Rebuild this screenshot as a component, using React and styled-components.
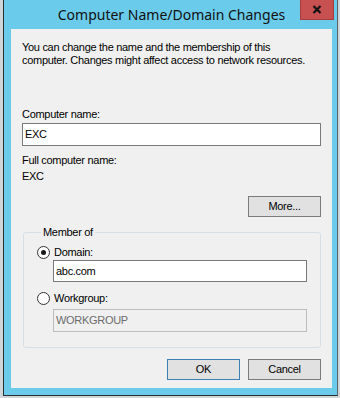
import styled, { createGlobalStyle } from 'styled-components'

const GlobalStyle = createGlobalStyle`
  body {
    margin: 0;
    background: #cfd6da;
    font-family: "Liberation Sans", Arial, sans-serif;
  }
`

const Window = styled.div`
  position: relative;
  box-sizing: border-box;
  width: 335px;
  height: 396px;
  margin-left: 3px;
  display: flex;
  flex-direction: column;
  background: #6bcbea;
  border-left: 1px solid #2b2f33;
  border-right: 1px solid #5d6469;
  border-bottom: 1px solid #2b2f33;
  padding: 0 5px 7px 7px;
`

const TitleBar = styled.div`
  height: 29px;
  display: flex;
  align-items: center;
  justify-content: center;
  padding-bottom: 1px;
  box-sizing: border-box;
`

const Title = styled.span`
  font-family: "Noto Sans", "Open Sans", sans-serif;
  font-size: 14px;
  color: #111;
`

const CloseButton = styled.div`
  position: absolute;
  top: 0;
  right: 3px;
  width: 34px;
  height: 20px;
  box-sizing: border-box;
  background: #c75050;
  border: 1px solid #a63d3d;
  border-top: none;
  display: flex;
  align-items: center;
  justify-content: center;
`

const Content = styled.div`
  flex: 1;
  background: #f0f0f0;
  padding: 12px 11px 0 11px;
  display: flex;
  flex-direction: column;
  font-size: 11px;
  letter-spacing: -0.3px;
  line-height: 13px;
  color: #000;
  white-space: nowrap;
`

const Text = styled.div`
  margin-top: ${(p) => p.$top || 0}px;
`

const Input = styled.div`
  box-sizing: border-box;
  height: ${(p) => p.$height || 23}px;
  margin-top: ${(p) => p.$top || 0}px;
  margin-left: ${(p) => p.$left || 0}px;
  width: ${(p) => (p.$width ? `${p.$width}px` : 'auto')};
  border: 1px solid ${(p) => (p.$disabled ? '#bcbcbc' : '#7a7a7a')};
  background: ${(p) => (p.$disabled ? '#f0f0f0' : '#fff')};
  color: ${(p) => (p.$disabled ? '#6d6d6d' : '#000')};
  padding-left: 2px;
  display: flex;
  align-items: center;
`

const ButtonRow = styled.div`
  display: flex;
  justify-content: flex-end;
  gap: 8px;
  margin-top: ${(p) => p.$top || 0}px;
`

const Button = styled.div`
  box-sizing: border-box;
  width: 73px;
  height: 21px;
  background: #e1e1e1;
  border: 1px solid ${(p) => (p.$default ? '#3c7fb1' : '#7b7b7b')};
  display: flex;
  align-items: center;
  justify-content: center;
`

const Group = styled.fieldset`
  margin: 9px 0 0 1px;
  width: 298px;
  height: 122px;
  box-sizing: border-box;
  border: 1px solid #d5dfe5;
  border-radius: 3px;
  padding: 0 0 0 12px;
  display: flex;
  flex-direction: column;
`

const Legend = styled.legend`
  padding: 0 2px;
  margin-left: 5px;
  line-height: 13px;
`

const RadioRow = styled.div`
  display: flex;
  align-items: center;
  gap: 4px;
  margin-top: ${(p) => p.$top || 0}px;
  margin-left: 1px;
`

const Radio = styled.span`
  box-sizing: border-box;
  width: 13px;
  height: 13px;
  border-radius: 50%;
  border: 1px solid #333;
  background: #fff;
  display: flex;
  align-items: center;
  justify-content: center;

  &::after {
    content: '';
    width: 5px;
    height: 5px;
    border-radius: 50%;
    background: ${(p) => (p.$checked ? '#1a1a1a' : 'transparent')};
  }
`

export default function App() {
  return (
    <>
      <GlobalStyle />
      <Window>
        <TitleBar>
          <Title>Computer Name/Domain Changes</Title>
        </TitleBar>
        <CloseButton>
          <svg width="10" height="9" viewBox="0 0 10 9">
            <path d="M1.5 1 L8.5 8 M8.5 1 L1.5 8" stroke="#111" strokeWidth="2.2" />
          </svg>
        </CloseButton>
        <Content>
          <Text>
            You can change the name and the membership of this
            <br />
            computer. Changes might affect access to network resources.
          </Text>
          <Text $top={41}>Computer name:</Text>
          <Input $top={2}>EXC</Input>
          <Text $top={8}>Full computer name:</Text>
          <Text $top={3}>EXC</Text>
          <ButtonRow $top={13}>
            <Button>More...</Button>
          </ButtonRow>
          <Group>
            <Legend>Member of</Legend>
            <RadioRow $top={7}>
              <Radio $checked />
              <span>Domain:</span>
            </RadioRow>
            <Input $top={1} $left={17} $width={254} $height={22}>abc.com</Input>
            <RadioRow $top={10}>
              <Radio />
              <span>Workgroup:</span>
            </RadioRow>
            <Input $top={4} $left={17} $width={254} $disabled>
              WORKGROUP
            </Input>
          </Group>
          <ButtonRow $top={11}>
            <Button $default>OK</Button>
            <Button>Cancel</Button>
          </ButtonRow>
        </Content>
      </Window>
    </>
  )
}
